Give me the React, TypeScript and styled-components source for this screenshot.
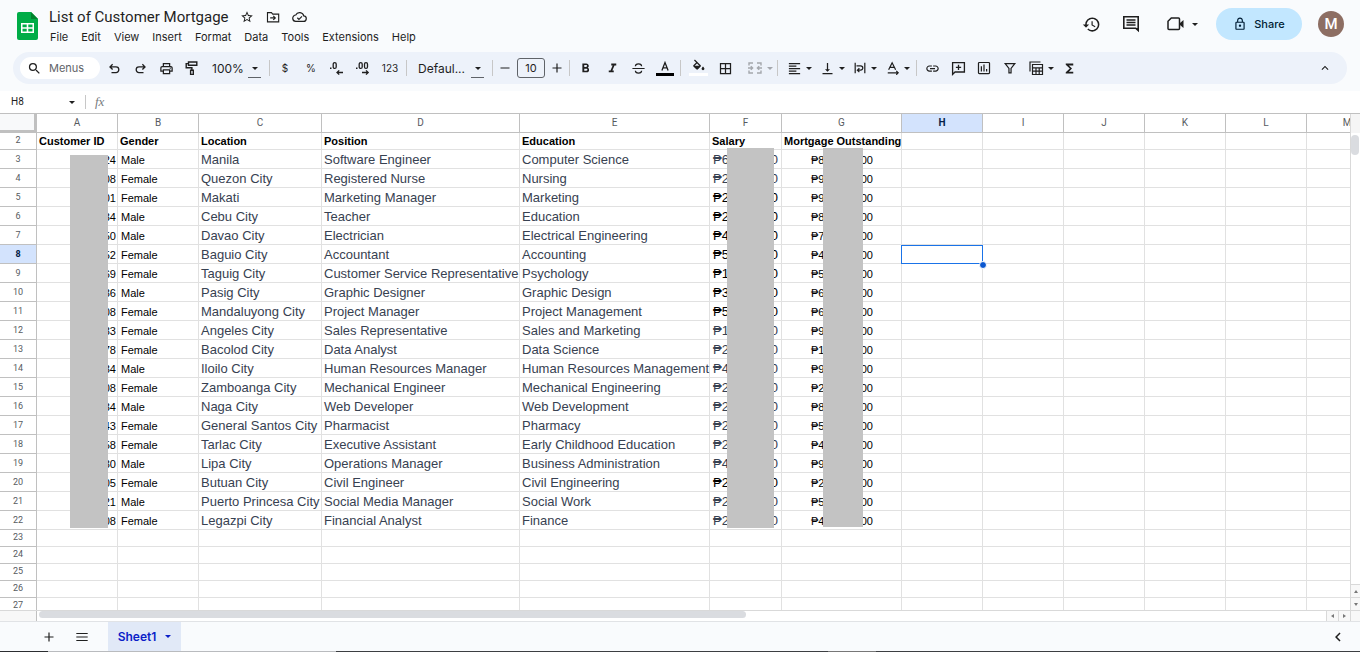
import React from "react";
import styled, { createGlobalStyle } from "styled-components";
import {
  MdStarBorder,
  MdHistory,
  MdOutlineLock,
  MdSearch,
  MdFormatBold,
  MdFormatItalic,
  MdBorderAll,
  MdFormatAlignLeft,
  MdVerticalAlignBottom,
  MdLink,
  MdFunctions,
  MdKeyboardArrowUp,
  MdChevronLeft,
  MdOutlinePrint,
} from "react-icons/md";

const ui = `Inter, Roboto, "Liberation Sans", sans-serif`;
const cellFont = `"Liberation Sans", Arial, sans-serif`;

const GlobalStyle = createGlobalStyle`
  *, *::before, *::after { box-sizing: border-box; }
  body { margin: 0; background: #fff; font-family: ${ui}; color: #1f1f1f; }
  button, input, select { font: inherit; color: inherit; margin: 0; padding: 0; border: 0; background: none; }
  button { cursor: pointer; }
  svg { display: block; flex: none; }
`;

const Page = styled.div`
  display: flex;
  flex-direction: column;
  height: 100vh;
  overflow: hidden;
`;

const Chrome = styled.header`
  flex: none;
  background: #f9fbfd;
  padding-bottom: 7px;
`;

const TopBar = styled.div`
  display: flex;
  align-items: flex-start;
  height: 52px;
  padding: 0 16px 0 17px;
`;

const Logo = styled.a`
  display: block;
  padding-top: 12px;
`;

const TitleBlock = styled.div`
  flex: 1;
  min-width: 0;
  padding: 6px 0 0 11px;
`;

const TitleRow = styled.div`
  display: flex;
  align-items: center;
  gap: 11px;
  height: 21px;
`;

const Title = styled.h1`
  margin: 0;
  font: 400 15px/20px Roboto, sans-serif;
  white-space: nowrap;
`;

const IconButton = styled.button<{ $w?: number; $h?: number }>`
  display: flex;
  align-items: center;
  justify-content: center;
  flex: none;
  width: ${(p) => p.$w ?? 15}px;
  height: ${(p) => p.$h ?? 15}px;
`;

const MenuBar = styled.nav`
  display: flex;
  gap: 13px;
  padding-left: 1px;
`;

const MenuItem = styled.button`
  font-size: 11px;
  line-height: 20px;
  white-space: nowrap;
`;

const Actions = styled.div`
  display: flex;
  align-items: center;
  gap: 12px;
  height: 48px;
  flex: none;
`;

const Meet = styled.button`
  display: flex;
  align-items: center;
  justify-content: space-between;
  width: 47px;
  height: 28px;
  padding: 0 6px 0 10px;
`;

const Share = styled.button`
  display: flex;
  align-items: center;
  justify-content: center;
  gap: 7px;
  width: 86px;
  height: 32px;
  border-radius: 16px;
  background: #c2e7ff;
  color: #001d35;
  font-size: 11px;
  font-weight: 500;
`;

const Avatar = styled.button`
  width: 26px;
  height: 26px;
  margin-left: 4px;
  border-radius: 50%;
  background: #8d6e63;
  color: #fff;
  font: 500 15px/26px Roboto, sans-serif;
`;

const Toolbar = styled.div`
  display: flex;
  align-items: center;
  height: 32px;
  margin: 0 13px;
  padding: 0 9px 0 7px;
  border-radius: 16px;
  background: #edf2fa;
  overflow: hidden;
`;

const MenuSearch = styled.label`
  display: flex;
  align-items: center;
  gap: 7px;
  width: 80px;
  height: 22px;
  margin-right: 1px;
  padding-left: 7px;
  border-radius: 11px;
  background: #fff;
  flex: none;
  input {
    width: 44px;
    font-size: 11px;
    line-height: 16px;
    outline: none;
  }
  input::placeholder { color: #5f6368; opacity: 1; }
`;

const Group = styled.div<{ $lead?: boolean }>`
  display: flex;
  align-items: center;
  flex: none;
  padding-left: ${(p) => (p.$lead ? 2 : 0)}px;
`;

const Divider = styled.span`
  width: 1px;
  height: 16px;
  margin: 0 2px;
  background: #c7c7c7;
  flex: none;
`;

const TextTool = styled.button<{ $w: number }>`
  width: ${(p) => p.$w}px;
  height: 24px;
  font: 400 10px/24px ${ui};
  text-align: center;
`;

const DropTool = styled.button<{ $lead: number; $off?: boolean }>`
  display: flex;
  align-items: center;
  height: 24px;
  width: ${(p) => p.$lead + 28}px;
  padding-left: ${(p) => p.$lead}px;
  gap: 4px;
  opacity: ${(p) => (p.$off ? 0.35 : 1)};
`;

const SelectWrap = styled.label<{ $w: number }>`
  position: relative;
  width: ${(p) => p.$w}px;
  height: 24px;
  select {
    appearance: none;
    width: 100%;
    height: 24px;
    padding-left: 7px;
    font-size: 12px;
    outline: none;
  }
  span {
    position: absolute;
    right: 6px;
    top: 0;
    display: flex;
    align-items: center;
    justify-content: center;
    width: 13px;
    height: 22px;
    padding-top: 4px;
    border-bottom: 1px solid #5f6368;
    pointer-events: none;
  }
`;

const SizeBox = styled.input`
  width: 28px;
  height: 20px;
  margin: 0 2px;
  border: 1px solid #5f6368;
  border-radius: 3px;
  text-align: center;
  font-size: 11px;
`;

const Collapse = styled.button`
  margin-left: auto;
  padding: 6px;
  flex: none;
`;

const FormulaBar = styled.div`
  display: flex;
  align-items: center;
  flex: none;
  height: 22px;
  background: #fff;
`;

const NameBox = styled.label`
  display: flex;
  align-items: center;
  width: 85px;
  padding: 0 10px 0 11px;
  input {
    flex: 1;
    min-width: 0;
    font: 400 10px/16px Roboto, sans-serif;
    outline: none;
  }
`;

const FormulaInput = styled.label`
  display: flex;
  align-items: center;
  flex: 1;
  gap: 8px;
  height: 14px;
  padding-left: 9px;
  border-left: 1px solid #c7c7c7;
  font: italic 13px/14px "Liberation Serif", serif;
  color: #777b80;
  input { flex: 1; outline: none; font: 400 11px/14px ${cellFont}; }
`;

const GridArea = styled.main`
  display: flex;
  flex: 1;
  min-height: 0;
  border-top: 1px solid #c0c0c0;
`;

const Viewport = styled.div`
  position: relative;
  flex: 1;
  min-width: 0;
  overflow: hidden;
`;

const Sheet = styled.table`
  table-layout: fixed;
  border-collapse: separate;
  border-spacing: 0;
  width: 1388px;
  font-family: ${cellFont};
  color: #000;
`;

const Corner = styled.td`
  height: 19px;
  padding: 0;
  background: #f8f9fa;
  border-right: 3px solid #c0c0c0;
  border-bottom: 3px solid #c0c0c0;
`;

const ColHead = styled.th<{ $on?: boolean }>`
  height: 19px;
  padding: 0;
  border-right: 1px solid #c0c0c0;
  border-bottom: 1px solid #c0c0c0;
  background: ${(p) => (p.$on ? "#d3e3fd" : "#fff")};
  color: ${(p) => (p.$on ? "#041e49" : "#575b5f")};
  font: ${(p) => (p.$on ? 700 : 400)} 10px/16px Roboto, sans-serif;
`;

const RowHead = styled.th<{ $on?: boolean; $h: number }>`
  height: ${(p) => p.$h}px;
  padding: 0 0 ${(p) => (p.$h < 19 ? 2 : 0)}px;
  border-right: 1px solid #c0c0c0;
  border-bottom: 1px solid #c0c0c0;
  background: ${(p) => (p.$on ? "#d3e3fd" : "#fff")};
  color: ${(p) => (p.$on ? "#041e49" : "#575b5f")};
  font: ${(p) => (p.$on ? 700 : 400)} 9px/14px Roboto, sans-serif;
`;

type Kind = "small" | "large" | "bold" | "id";

const Cell = styled.td<{ $kind?: Kind }>`
  position: relative;
  height: inherit;
  padding: 0 ${(p) => (p.$kind === "id" ? 1 : 2)}px 1px ${(p) => (p.$kind === "small" ? 3 : 2)}px;
  border-right: 1px solid #e1e1e1;
  border-bottom: 1px solid #e1e1e1;
  vertical-align: bottom;
  white-space: nowrap;
  text-align: ${(p) => (p.$kind === "id" ? "right" : "left")};
  font-size: ${(p) => (p.$kind === "large" ? 13 : 11)}px;
  line-height: ${(p) => (p.$kind === "large" ? 15 : 13)}px;
  font-weight: ${(p) => (p.$kind === "bold" ? 700 : 400)};
  color: ${(p) => (p.$kind === "large" ? "#374151" : "#000")};
`;

const Amount = styled.div<{ $inset?: boolean; $dark?: boolean }>`
  display: flex;
  justify-content: space-between;
  padding: 0 ${(p) => (p.$inset ? 26 : 1)}px;
  color: ${(p) => (p.$dark ? "#000" : "inherit")};
`;

const Selection = styled.div`
  position: absolute;
  inset: 0 -1px -1px -1px;
  z-index: 1;
  border: 1px solid #1a73e8;
  &::after {
    content: "";
    position: absolute;
    right: -5px;
    bottom: -6px;
    width: 8px;
    height: 8px;
    border: 1px solid #fff;
    border-radius: 50%;
    background: #0b57d0;
  }
`;

const Redaction = styled.div<{ $x: number; $y: number; $w: number; $h: number }>`
  position: absolute;
  left: ${(p) => p.$x}px;
  top: ${(p) => p.$y}px;
  width: ${(p) => p.$w}px;
  height: ${(p) => p.$h}px;
  background: #c3c3c3;
`;

const VScroll = styled.div`
  display: flex;
  flex-direction: column;
  width: 10px;
  flex: none;
  border-left: 1px solid #d9d9d9;
`;

const VHead = styled.div`
  height: 19px;
  background: #f5f5f5;
`;

const VTrack = styled.div`
  flex: 1;
  padding: 2px 1px 0 0;
`;

const VThumb = styled.div`
  height: 20px;
  border-radius: 4px;
  background: #dadce0;
`;

const ScrollStep = styled.button<{ $side?: boolean }>`
  display: flex;
  align-items: center;
  justify-content: center;
  background: #f8f8f8;
  width: ${(p) => (p.$side ? "12px" : "100%")};
  height: ${(p) => (p.$side ? "10px" : "13px")};
  border-top: ${(p) => (p.$side ? "0" : "1px solid #d9d9d9")};
  border-left: ${(p) => (p.$side ? "1px solid #d9d9d9" : "0")};
`;

const HScroll = styled.div`
  display: flex;
  flex: none;
  height: 11px;
  border-top: 1px solid #d9d9d9;
`;

const HHead = styled.div`
  width: 37px;
  background: #f8f8f8;
  border-right: 1px solid #c0c0c0;
`;

const HTrack = styled.div`
  flex: 1;
  padding: 0 2px;
`;

const HThumb = styled.div`
  width: 55%;
  height: 7px;
  border-radius: 4px;
  background: #dadce0;
`;

const HEnd = styled.div`
  width: 10px;
  background: #f8f8f8;
  border-left: 1px solid #d9d9d9;
`;

const Footer = styled.footer`
  display: flex;
  align-items: center;
  flex: none;
  height: 30px;
  padding: 0 13px 0 36px;
  background: #f9fbfd;
  border-top: 1px solid #e1e3e6;
`;

const SheetTab = styled.button`
  display: flex;
  align-items: center;
  justify-content: center;
  gap: 9px;
  align-self: stretch;
  width: 73px;
  margin-left: 6px;
  background: #e1e9f7;
  color: #0b1ec8;
  font-size: 12px;
  font-weight: 600;
`;

const Prev = styled.button`
  margin-left: auto;
`;

const Edge = styled.div`
  flex: none;
  height: 1px;
  background: linear-gradient(90deg, #2b2d30 48px, #b9bbbe 48px 336px, #3c3e42 336px 828px, #777 828px 876px, #3c3e42 876px);
`;

const Caret = ({ w = 6 }: { w?: number }) => (
  <svg width={w} height={w / 2} viewBox="0 0 6 3" fill="currentColor">
    <path d="M0 0h6L3 3z" />
  </svg>
);

const Stroke = ({ s = 16, w = 1.4, children }: { s?: number; w?: number; children: React.ReactNode }) => (
  <svg width={s} height={s} viewBox="0 0 16 16" fill="none" stroke="currentColor" strokeWidth={w}>
    {children}
  </svg>
);

const SheetsLogo = () => (
  <svg width="21" height="28" viewBox="0 0 21 28">
    <path fill="#00ac47" d="M2 0h12l7 7v19a2 2 0 0 1-2 2H2a2 2 0 0 1-2-2V2a2 2 0 0 1 2-2z" />
    <path fill="#00832d" d="M14 0l7 7h-7z" />
    <path fill="#fff" fillRule="evenodd" d="M4 11h13v10H4zM5.500 12.500v2.700h4.200v-2.700zM11.300 12.500v2.700h4.200v-2.700zM5.500 16.800v2.700h4.200v-2.700zM11.300 16.800v2.700h4.200v-2.700z" />
  </svg>
);

const FolderMove = () => (
  <Stroke s={14} w={1.300}>
    <path d="M1.700 3h4.500l1.500 1.700h6.800v8.800H1.700zM4.800 9h5.500M8.300 6.800L10.600 9l-2.300 2.200" />
  </Stroke>
);
const CloudDone = () => (
  <Stroke s={15} w={1.300}>
    <path d="M4.400 13.200h7.700a2.900 2.900 0 0 0 .4-5.800A4.500 4.500 0 0 0 4 6.400a3.400 3.400 0 0 0 .4 6.800zM5.700 9.300l1.700 1.700 3.200-3.200" />
  </Stroke>
);
const Comment = () => (
  <svg width="18" height="18" viewBox="0 0 18 18" fill="none" stroke="currentColor" strokeWidth="1.600">
    <path d="M1.800 1.800h14.400v13.700l-2.500-2.300H1.800z" />
    <path d="M4.500 5h9M4.500 7.500h9M4.500 10h9" strokeWidth="1.400" />
    <path d="M13.500 13l3.300 3.400V13z" fill="currentColor" stroke="none" />
  </svg>
);
const Camera = () => (
  <svg width="17" height="14" viewBox="0 0 17 14" fill="none" stroke="currentColor" strokeWidth="1.500">
    <path d="M4.300 1h7.200q1 0 1 1v9.500q0 1-1 1H2q-1 0-1-1V4.300z" />
    <path d="M13 6l3.500-3v8L13 8z" fill="currentColor" stroke="none" />
  </svg>
);
const Undo = () => (
  <Stroke s={15}>
    <path d="M6 3.500L3.200 6.300 6 9.100M3.400 6.300h6.200a3 3 0 0 1 0 6H4.800" />
  </Stroke>
);
const Redo = () => (
  <Stroke s={15}>
    <path d="M10 3.500l2.800 2.800L10 9.100M12.600 6.300H6.400a3 3 0 0 0 0 6h4.800" />
  </Stroke>
);
const Roller = () => (
  <Stroke>
    <path d="M4.500 2h8.300v3.300H4.500zM4.500 3.600H2.200v4.200h5.700v2.400M6.600 10.200h2.700v4.200H6.600z" />
  </Stroke>
);
const Decimals = ({ more }: { more?: boolean }) => (
  <svg width="18" height="16" viewBox="0 0 18 16" fill="none" stroke="currentColor" strokeWidth="1.300">
    <path d="M2 8.200h1.500" strokeWidth="1.500" />
    <rect x="5.200" y="2.600" width="3" height="5.800" rx="1.500" />
    {more && <rect x="10.500" y="2.600" width="3" height="5.800" rx="1.500" />}
    {more ? <path d="M8 12.500h6M12 10.400l2.200 2.100-2.200 2.100" /> : <path d="M9.200 12.500H15M11.200 10.400L9 12.500l2.200 2.100" />}
  </svg>
);
const Strike = () => (
  <Stroke s={15} w={1.300}>
    <path d="M1.500 8h13M11.300 5.700c0-1.700-1.400-2.600-3.300-2.600S4.700 4.100 4.700 5.700M4.700 10.300c0 1.700 1.400 2.600 3.300 2.600s3.300-1 3.300-2.600" />
  </Stroke>
);
const TextColor = () => (
  <svg width="18" height="18" viewBox="0 0 18 18" fill="none" stroke="currentColor" strokeWidth="1.300">
    <path d="M5.900 11.500L9 3.500l3.100 8M6.900 8.900h4.200" />
    <path d="M0 15.500h18" stroke="#000" strokeWidth="3" />
  </svg>
);
const Fill = () => (
  <svg width="19" height="18" viewBox="0 0 19 18" fill="currentColor">
    <path d="M5 1.500l.9-.9 5.800 5.700a.9.9 0 0 1 0 1.200L9 10.300a1.200 1.200 0 0 1-1.700 0L4.400 7.500a.9.900 0 0 1 0-1.200L7.100 3.600zM8 4.500L5.700 6.800h4.600z" />
    <path d="M14 7.500s1.400 1.500 1.400 2.300a1.400 1.400 0 0 1-2.800 0c0-.8 1.400-2.300 1.400-2.300z" />
    <path fill="#fff" d="M0 14h19v3H0z" />
  </svg>
);
const Merge = () => (
  <Stroke>
    <path d="M2 5.500V3h4M10 3h4v2.500M2 10.500V13h4M10 13h4v-2.500M1 8h4.500M3.800 6.200L5.600 8 3.800 9.800M15 8h-4.500M12.200 6.200L10.400 8l1.800 1.800" />
  </Stroke>
);
const Wrap = () => (
  <Stroke s={14}>
    <path d="M2.500 2v12M13.500 2v12M4 5.500h4.700a2.500 2.500 0 0 1 0 5H5.500M7.300 8.300L5 10.500l2.300 2.200" />
  </Stroke>
);
const Rotate = () => (
  <Stroke s={14}>
    <path d="M3 10L7 2l4 8M4.300 7.300h5.400M2 13.500h11.500M11.700 11.300l2.200 2.200-2.200 2.200" />
  </Stroke>
);
const AddComment = () => (
  <Stroke s={15}>
    <path d="M1.700 1.700h12.600v10H4.300l-2.600 2.600zM8 3.900v5.600M5.200 6.700h5.600" />
  </Stroke>
);
const Chart = () => (
  <Stroke s={14}>
    <rect x="1.700" y="1.700" width="12.600" height="12.600" rx="1" />
    <path d="M5 12V6M8 12V4M11 12V9" />
  </Stroke>
);
const Filter = () => (
  <Stroke s={14}>
    <path d="M2.500 3h11L9.200 8.500v5H6.800v-5z" />
  </Stroke>
);
const TableViews = () => (
  <Stroke w={1.200}>
    <path d="M2 11.500V2h10.500M4.500 4.500h10v10h-10zM4.500 7.800h10M4.500 11.200h10M8 7.800v6.700M11.200 7.800v6.700" />
  </Stroke>
);
const Plus = ({ s = 12 }: { s?: number }) => (
  <Stroke s={s}>
    <path d="M8 2v12M2 8h12" strokeWidth="1.600" />
  </Stroke>
);
const Minus = () => (
  <Stroke s={12}>
    <path d="M2 8h12" strokeWidth="1.600" />
  </Stroke>
);
const Bars = () => (
  <Stroke s={14}>
    <path d="M1.500 4h13M1.500 8h13M1.500 12h13" strokeWidth="1.400" />
  </Stroke>
);

const menus = ["File", "Edit", "View", "Insert", "Format", "Data", "Tools", "Extensions", "Help"];

const columns: [string, number][] = [
  ["A", 81], ["B", 81], ["C", 123], ["D", 198], ["E", 190], ["F", 72], ["G", 120],
  ["H", 81], ["I", 81], ["J", 81], ["K", 81], ["L", 81], ["M", 81],
];

const headings = ["Customer ID", "Gender", "Location", "Position", "Education", "Salary", "Mortgage Outstanding"];

// id ending, gender, location, position, education, salary lead, mortgage lead, salary printed in black
type Customer = [string, string, string, string, string, string, string, boolean?];

const customers: Customer[] = [
  ["24", "Male", "Manila", "Software Engineer", "Computer Science", "₱6", "₱8"],
  ["08", "Female", "Quezon City", "Registered Nurse", "Nursing", "₱2", "₱9"],
  ["01", "Female", "Makati", "Marketing Manager", "Marketing", "₱2", "₱9", true],
  ["34", "Male", "Cebu City", "Teacher", "Education", "₱2", "₱8", true],
  ["50", "Male", "Davao City", "Electrician", "Electrical Engineering", "₱4", "₱7", true],
  ["52", "Female", "Baguio City", "Accountant", "Accounting", "₱5", "₱4", true],
  ["69", "Female", "Taguig City", "Customer Service Representative", "Psychology", "₱1", "₱5", true],
  ["36", "Male", "Pasig City", "Graphic Designer", "Graphic Design", "₱3", "₱6", true],
  ["08", "Female", "Mandaluyong City", "Project Manager", "Project Management", "₱5", "₱6", true],
  ["33", "Female", "Angeles City", "Sales Representative", "Sales and Marketing", "₱1", "₱9"],
  ["78", "Female", "Bacolod City", "Data Analyst", "Data Science", "₱2", "₱1"],
  ["34", "Male", "Iloilo City", "Human Resources Manager", "Human Resources Management", "₱4", "₱9"],
  ["08", "Female", "Zamboanga City", "Mechanical Engineer", "Mechanical Engineering", "₱2", "₱2"],
  ["34", "Male", "Naga City", "Web Developer", "Web Development", "₱2", "₱8"],
  ["43", "Female", "General Santos City", "Pharmacist", "Pharmacy", "₱2", "₱5"],
  ["58", "Female", "Tarlac City", "Executive Assistant", "Early Childhood Education", "₱2", "₱4"],
  ["30", "Male", "Lipa City", "Operations Manager", "Business Administration", "₱4", "₱9"],
  ["05", "Female", "Butuan City", "Civil Engineer", "Civil Engineering", "₱2", "₱2", true],
  ["21", "Male", "Puerto Princesa City", "Social Media Manager", "Social Work", "₱2", "₱5"],
  ["08", "Female", "Legazpi City", "Financial Analyst", "Finance", "₱2", "₱4"],
];

const Blank = ({ n, selected }: { n: number; selected?: boolean }) => (
  <>
    {Array.from({ length: n }, (_, i) => (
      <Cell key={i}>{selected && i === 0 && <Selection />}</Cell>
    ))}
  </>
);

export default function App() {
  return (
    <Page>
      <GlobalStyle />
      <Chrome>
        <TopBar>
          <Logo href="#" aria-label="Sheets home"><SheetsLogo /></Logo>
          <TitleBlock>
            <TitleRow>
              <Title>List of Customer Mortgage</Title>
              <IconButton aria-label="Star"><MdStarBorder size={14} /></IconButton>
              <IconButton aria-label="Move"><FolderMove /></IconButton>
              <IconButton aria-label="Document status"><CloudDone /></IconButton>
            </TitleRow>
            <MenuBar>
              {menus.map((m) => <MenuItem key={m}>{m}</MenuItem>)}
            </MenuBar>
          </TitleBlock>
          <Actions>
            <IconButton $w={28} $h={28} aria-label="Version history"><MdHistory size={19} /></IconButton>
            <IconButton $w={28} $h={28} aria-label="Comments"><Comment /></IconButton>
            <Meet aria-label="Join a call"><Camera /><Caret /></Meet>
            <Share><MdOutlineLock size={14} />Share</Share>
            <Avatar>M</Avatar>
          </Actions>
        </TopBar>
        <Toolbar>
          <MenuSearch>
            <MdSearch size={15} />
            <input placeholder="Menus" aria-label="Search the menus" />
          </MenuSearch>
          <Group>
            <IconButton $w={26} $h={24} aria-label="Undo"><Undo /></IconButton>
            <IconButton $w={26} $h={24} aria-label="Redo"><Redo /></IconButton>
            <IconButton $w={26} $h={24} aria-label="Print"><MdOutlinePrint size={15} /></IconButton>
            <IconButton $w={26} $h={24} aria-label="Paint format"><Roller /></IconButton>
            <SelectWrap $w={62}>
              <select aria-label="Zoom"><option>100%</option></select>
              <span><Caret /></span>
            </SelectWrap>
          </Group>
          <Divider />
          <Group>
            <TextTool $w={26}>$</TextTool>
            <TextTool $w={26}>%</TextTool>
            <IconButton $w={26} $h={24} aria-label="Decrease decimal places"><Decimals /></IconButton>
            <IconButton $w={26} $h={24} aria-label="Increase decimal places"><Decimals more /></IconButton>
            <TextTool $w={28}>123</TextTool>
          </Group>
          <Divider />
          <Group $lead>
            <SelectWrap $w={79}>
              <select aria-label="Font"><option>Defaul...</option></select>
              <span><Caret /></span>
            </SelectWrap>
          </Group>
          <Divider />
          <Group>
            <IconButton $w={20} $h={24} aria-label="Decrease font size"><Minus /></IconButton>
            <SizeBox aria-label="Font size" defaultValue="10" />
            <IconButton $w={20} $h={24} aria-label="Increase font size"><Plus /></IconButton>
          </Group>
          <Divider />
          <Group>
            <IconButton $w={27} $h={24} aria-label="Bold"><MdFormatBold size={15} /></IconButton>
            <IconButton $w={26} $h={24} aria-label="Italic"><MdFormatItalic size={15} /></IconButton>
            <IconButton $w={26} $h={24} aria-label="Strikethrough"><Strike /></IconButton>
            <IconButton $w={27} $h={24} aria-label="Text color"><TextColor /></IconButton>
          </Group>
          <Divider />
          <Group $lead>
            <IconButton $w={27} $h={24} aria-label="Fill color"><Fill /></IconButton>
            <IconButton $w={27} $h={24} aria-label="Borders"><MdBorderAll size={15} /></IconButton>
            <DropTool $lead={8} $off aria-label="Merge cells"><Merge /><Caret /></DropTool>
          </Group>
          <Divider />
          <Group $lead>
            <DropTool $lead={5} aria-label="Horizontal align"><MdFormatAlignLeft size={15} /><Caret /></DropTool>
            <DropTool $lead={5} aria-label="Vertical align"><MdVerticalAlignBottom size={15} /><Caret /></DropTool>
            <DropTool $lead={5} aria-label="Text wrapping"><Wrap /><Caret /></DropTool>
            <DropTool $lead={5} aria-label="Text rotation"><Rotate /><Caret /></DropTool>
          </Group>
          <Divider />
          <Group>
            <IconButton $w={26} $h={24} aria-label="Insert link"><MdLink size={15} /></IconButton>
            <IconButton $w={26} $h={24} aria-label="Insert comment"><AddComment /></IconButton>
            <IconButton $w={26} $h={24} aria-label="Insert chart"><Chart /></IconButton>
            <IconButton $w={26} $h={24} aria-label="Create a filter"><Filter /></IconButton>
            <DropTool $lead={5} aria-label="Table views"><TableViews /><Caret /></DropTool>
            <IconButton $w={26} $h={24} aria-label="Functions"><MdFunctions size={15} /></IconButton>
          </Group>
          <Collapse aria-label="Hide the menus"><MdKeyboardArrowUp size={14} /></Collapse>
        </Toolbar>
      </Chrome>

      <FormulaBar>
        <NameBox>
          <input aria-label="Name box" defaultValue="H8" />
          <Caret />
        </NameBox>
        <FormulaInput>
          fx
          <input aria-label="Formula" />
        </FormulaInput>
      </FormulaBar>

      <GridArea>
        <Viewport>
          <Sheet>
            <colgroup>
              <col width={37} />
              {columns.map(([c, w]) => <col key={c} width={w} />)}
            </colgroup>
            <thead>
              <tr>
                <Corner />
                {columns.map(([c]) => <ColHead key={c} scope="col" $on={c === "H"}>{c}</ColHead>)}
              </tr>
            </thead>
            <tbody>
              <tr>
                <RowHead scope="row" $h={17}>2</RowHead>
                {headings.map((h) => <Cell key={h} $kind="bold">{h}</Cell>)}
                <Blank n={6} />
              </tr>
              {customers.map(([id, gender, place, job, study, salary, mortgage, dark], i) => (
                <tr key={i}>
                  <RowHead scope="row" $h={19} $on={i === 5}>{i + 3}</RowHead>
                  <Cell $kind="id">{id}</Cell>
                  <Cell $kind="small">{gender}</Cell>
                  <Cell $kind="large">{place}</Cell>
                  <Cell $kind="large">{job}</Cell>
                  <Cell $kind="large">{study}</Cell>
                  <Cell $kind="large"><Amount $dark={dark}><span>{salary}</span><span>0</span></Amount></Cell>
                  <Cell $kind="small"><Amount $inset><span>{mortgage}</span><span>00</span></Amount></Cell>
                  <Blank n={6} selected={i === 5} />
                </tr>
              ))}
              {[23, 24, 25, 26, 27].map((n) => (
                <tr key={n}>
                  <RowHead scope="row" $h={17}>{n}</RowHead>
                  <Blank n={13} />
                </tr>
              ))}
            </tbody>
          </Sheet>
          <Redaction $x={70} $y={41} $w={38} $h={373} />
          <Redaction $x={727} $y={34} $w={47} $h={380} />
          <Redaction $x={823} $y={34} $w={40} $h={379} />
        </Viewport>
        <VScroll>
          <VHead />
          <VTrack><VThumb /></VTrack>
          <ScrollStep aria-label="Scroll up">
            <svg width="4" height="3" viewBox="0 0 4 3"><path fill="#777" d="M0 3l2-3 2 3z" /></svg>
          </ScrollStep>
          <ScrollStep aria-label="Scroll down">
            <svg width="4" height="3" viewBox="0 0 4 3"><path fill="#777" d="M0 0l2 3 2-3z" /></svg>
          </ScrollStep>
        </VScroll>
      </GridArea>

      <HScroll>
        <HHead />
        <HTrack><HThumb /></HTrack>
        <ScrollStep $side aria-label="Scroll left">
          <svg width="3" height="4" viewBox="0 0 3 4"><path fill="#777" d="M3 0L0 2l3 2z" /></svg>
        </ScrollStep>
        <ScrollStep $side aria-label="Scroll right">
          <svg width="3" height="4" viewBox="0 0 3 4"><path fill="#777" d="M0 0l3 2-3 2z" /></svg>
        </ScrollStep>
        <HEnd />
      </HScroll>

      <Footer>
        <IconButton $w={26} $h={24} aria-label="Add sheet"><Plus /></IconButton>
        <IconButton $w={40} $h={24} aria-label="All sheets"><Bars /></IconButton>
        <SheetTab>Sheet1<Caret /></SheetTab>
        <Prev aria-label="Show side panel"><MdChevronLeft size={18} /></Prev>
      </Footer>
      <Edge />
    </Page>
  );
}
